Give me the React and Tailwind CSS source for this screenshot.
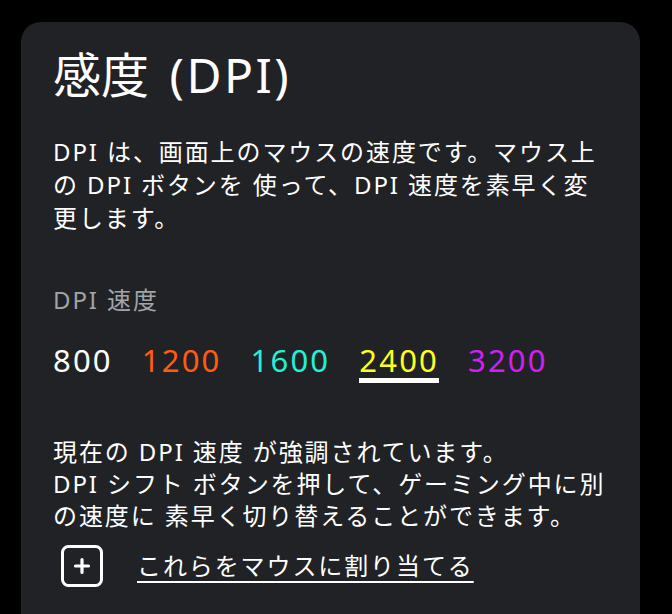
import React from "react";

const DPI_LEVELS = [
    { value: "800", color: "text-white" },
    { value: "1200", color: "text-[#ff5b14]" },
    { value: "1600", color: "text-[#24f0d6]" },
    { value: "2400", color: "text-[#ffff1f]", active: true },
    { value: "3200", color: "text-[#d21ff4]" },
];

const PlusIcon = () => (
    <svg width="44" height="44" viewBox="0 0 44 44" fill="none">
        <rect x="2.5" y="2.5" width="39" height="39" rx="6" stroke="white" strokeWidth="3" />
        <path d="M22 15.5v13M15.5 22h13" stroke="white" strokeWidth="3.2" strokeLinecap="round" />
    </svg>
);

export default function App() {
    return (
        <main
            className="min-h-screen bg-black pt-[22px] pl-[21px] pr-[32px]"
            style={{ fontFamily: '"Noto Sans", "Noto Sans CJK JP", sans-serif' }}
        >
            <section className="w-[619px] h-[600px] bg-[#212226] rounded-t-[20px] px-8 pt-6 text-white">
                {/* Title */}
                <h1 className="text-[48px] leading-[58px]">
                    感度 <span className="ml-[8px] tracking-[2.5px]">(DPI)</span>
                </h1>

                {/* Description */}
                <p className="mt-[31px] text-[24px] leading-[33px] tracking-[1.9px] whitespace-nowrap">
                    <span className="block">DPI は、画面上のマウスの速度です。マウス上</span>
                    <span className="block">の DPI ボタンを 使って、DPI 速度を素早く変</span>
                    <span className="block">更します。</span>
                </p>

                {/* DPI levels */}
                <h2 className="mt-[49px] text-[24px] leading-[33px] tracking-[1.9px] text-[#a3a4a6]">DPI 速度</h2>
                <div className="mt-[26px] flex items-start gap-[29px] text-[31px] leading-[36px] tracking-[2.2px]">
                    {DPI_LEVELS.map((lvl) => (
                        <span
                            key={lvl.value}
                            className={`${lvl.color} ${lvl.active ? "border-b-[5px] border-white" : "pb-[5px]"}`}
                        >
                            {lvl.value}
                        </span>
                    ))}
                </div>

                {/* Hint */}
                <p className="mt-[53px] text-[24px] leading-[32px] tracking-[1.9px] whitespace-nowrap">
                    <span className="block">現在の DPI 速度 が強調されています。</span>
                    <span className="block">DPI シフト ボタンを押して、ゲーミング中に別</span>
                    <span className="block">の速度に 素早く切り替えることができます。</span>
                </p>

                <div className="mt-[12px] flex items-center">
                    <span className="ml-[7px]">
                        <PlusIcon />
                    </span>
                    <a
                        href="#"
                        className="ml-[33px] text-[24px] tracking-[1.9px] underline underline-offset-[6px] decoration-2"
                    >
                        これらをマウスに割り当てる
                    </a>
                </div>
            </section>
        </main>
    );
}
